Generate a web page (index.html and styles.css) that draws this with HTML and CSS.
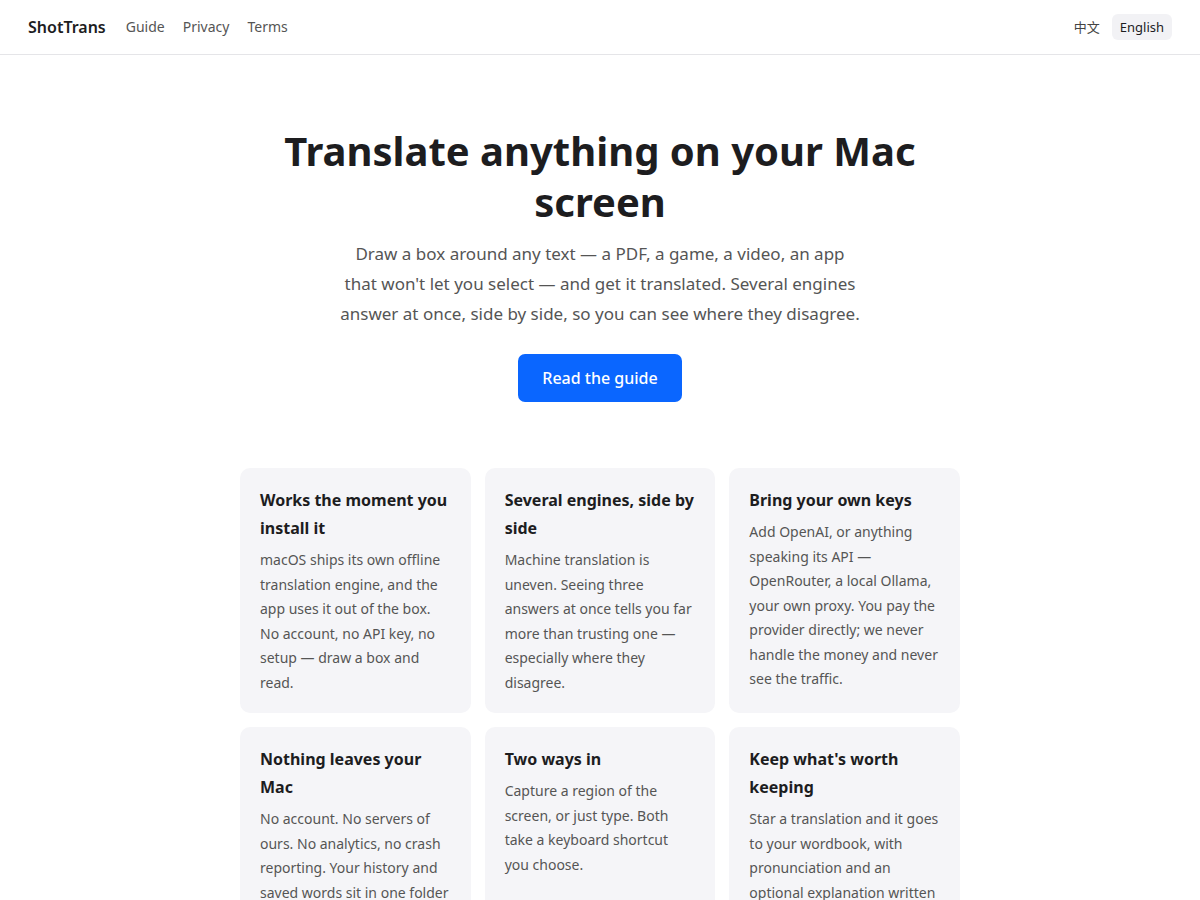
FILE: index.html
```html
<!DOCTYPE html>
<html lang="en">
<head>
<meta charset="utf-8">
<title>ShotTrans</title>
<link rel="stylesheet" href="styles.css">
</head>
<body>
<header class="topbar">
  <div class="left">
    <a class="logo" href="#">ShotTrans</a>
    <nav class="nav">
      <a href="#">Guide</a>
      <a href="#">Privacy</a>
      <a href="#">Terms</a>
    </nav>
  </div>
  <div class="lang">
    <a class="lang-item" href="#">中文</a>
    <a class="lang-item active" href="#">English</a>
  </div>
</header>
<main class="main">
  <section class="hero">
    <h1>Translate anything on your Mac screen</h1>
    <p class="lead">Draw a box around any text — a PDF, a game, a video, an app that won't let you select — and get it translated. Several engines answer at once, side by side, so you can see where they disagree.</p>
    <a class="cta" href="#">Read the guide</a>
  </section>
  <section class="features">
    <div class="card">
      <h3>Works the moment you install it</h3>
      <p>macOS ships its own offline translation engine, and the app uses it out of the box. No account, no API key, no setup — draw a box and read.</p>
    </div>
    <div class="card">
      <h3>Several engines, side by side</h3>
      <p>Machine translation is uneven. Seeing three answers at once tells you far more than trusting one — especially where they disagree.</p>
    </div>
    <div class="card">
      <h3>Bring your own keys</h3>
      <p>Add OpenAI, or anything speaking its API — OpenRouter, a local Ollama, your own proxy. You pay the provider directly; we never handle the money and never see the traffic.</p>
    </div>
    <div class="card">
      <h3>Nothing leaves your Mac</h3>
      <p>No account. No servers of ours. No analytics, no crash reporting. Your history and saved words sit in one folder on your disk, and deleting it removes everything.</p>
    </div>
    <div class="card">
      <h3>Two ways in</h3>
      <p>Capture a region of the screen, or just type. Both take a keyboard shortcut you choose.</p>
    </div>
    <div class="card">
      <h3>Keep what's worth keeping</h3>
      <p>Star a translation and it goes to your wordbook, with pronunciation and an optional explanation written for you, ready to review later.</p>
    </div>
  </section>
</main>
</body>
</html>
```

FILE: styles.css
```css
* { box-sizing: border-box; }
html, body { margin: 0; padding: 0; }
body {
  font-family: "Noto Sans", "Noto Sans CJK SC", sans-serif;
  color: #1d1d1f;
  background: #fff;
}
a { text-decoration: none; color: inherit; }

.topbar {
  height: 55px;
  border-bottom: 1px solid #e5e5e8;
  display: flex;
  align-items: center;
  justify-content: space-between;
  padding: 0 28px 1px;
}
.left { display: flex; align-items: center; gap: 20px; }
.logo { font-weight: 600; font-size: 16px; color: #1d1d1f; }
.nav { display: flex; gap: 18px; }
.nav a { font-size: 14px; color: #555; }
.lang { display: flex; align-items: center; gap: 4px; }
.lang-item {
  font-size: 13px;
  color: #444;
  padding: 4px 8px;
  border-radius: 6px;
}
.lang-item.active { background: #f2f2f5; color: #1d1d1f; }

.main { max-width: 720px; margin: 0 auto; }
.hero {
  text-align: center;
  padding-top: 70px;
  display: flex;
  flex-direction: column;
  align-items: center;
}
.hero h1 {
  margin: 0;
  font-size: 40px;
  line-height: 51px;
  font-weight: 700;
  color: #1d1d1f;
  max-width: 680px;
}
.lead {
  margin: 12px 0 0;
  max-width: 522px;
  font-size: 17px;
  line-height: 30px;
  color: #555;
}
.cta {
  margin-top: 25px;
  background: #0a66ff;
  color: #fff;
  font-size: 16px;
  font-weight: 500;
  height: 48px;
  width: 164px;
  display: flex;
  align-items: center;
  justify-content: center;
  border-radius: 7px;
}

.features {
  margin-top: 66px;
  display: grid;
  grid-template-columns: repeat(3, 1fr);
  gap: 14px 14px;
}
.card {
  background: #f5f5f8;
  border-radius: 10px;
  padding: 18px 20px 18px;
}
.card h3 {
  margin: 0;
  font-size: 16px;
  line-height: 28px;
  font-weight: 700;
  color: #1d1d1f;
}
.card p {
  margin: 6px 0 0;
  font-size: 14px;
  line-height: 24.5px;
  color: #555;
}
```
